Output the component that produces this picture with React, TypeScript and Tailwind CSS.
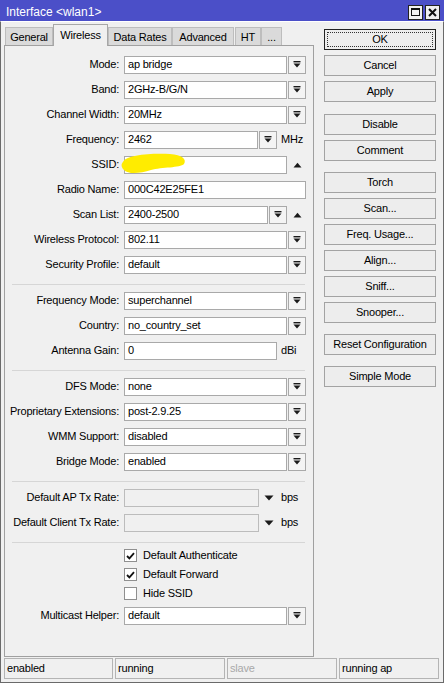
import React from "react";

const DropIcon = () => (
  <svg width="8" height="7" viewBox="0 0 8 7">
    <rect x="0.5" y="0" width="7" height="1.4" fill="#1a1a1a" />
    <polygon points="0.5,2.4 7.5,2.4 4,6.6" fill="#1a1a1a" />
  </svg>
);

const UpTri = () => (
  <svg width="9" height="6" viewBox="0 0 9 6" className="ml-[6px]">
    <polygon points="0.5,5.5 8.5,5.5 4.5,0.8" fill="#1a1a1a" />
  </svg>
);

const DownTri = () => (
  <svg width="10" height="6" viewBox="0 0 10 6">
    <polygon points="0.5,0.5 9.5,0.5 5,5.6" fill="#1a1a1a" />
  </svg>
);

const DropBtn = () => (
  <div className="ml-[1px] w-[18px] h-[18px] border border-[#a9a9a9] bg-[#f4f4f4] flex items-center justify-center">
    <DropIcon />
  </div>
);

const Field = ({ w, value, disabled }: { w: string; value?: string; disabled?: boolean }) => (
  <div
    className={
      "h-[18px] border flex items-center px-[3px] whitespace-nowrap overflow-hidden " +
      w +
      (disabled ? " bg-[#f0f0f0] border-[#bcbcbc]" : " bg-white border-[#a9a9a9]")
    }
  >
    {value}
  </div>
);

const Row = ({ label, children, extra }: { label: string; children: React.ReactNode; extra?: React.ReactNode }) => (
  <div className="relative flex items-center h-[25px]">
    <div className="w-[114px] text-right whitespace-nowrap">{label}</div>
    <div className="ml-[5px] flex items-center">{children}</div>
    {extra}
  </div>
);

const Sep = () => (
  <div className="h-[11px] pt-[7px] pl-[7px] pr-[8px]">
    <div className="h-px bg-[#d6d6d6]" />
  </div>
);

const Check = ({ label, checked }: { label: string; checked?: boolean }) => (
  <div className="flex items-center h-[19px] pl-[119px]">
    <div className="w-[13px] h-[13px] border border-[#8f8f8f] bg-white flex items-center justify-center">
      {checked && (
        <svg width="9" height="8" viewBox="0 0 9 8">
          <path d="M1 4 L3.4 6.4 L8 1.2" stroke="#111" strokeWidth="1.8" fill="none" />
        </svg>
      )}
    </div>
    <span className="ml-[6px]">{label}</span>
  </div>
);

const Btn = ({ label, mt, focus }: { label: string; mt: string; focus?: boolean }) => (
  <div
    className={
      "h-[21px] flex items-center justify-center bg-[#ededed] border " +
      mt +
      (focus ? " border-[#222] p-[2px]" : " border-[#a3a3a3]")
    }
  >
    {focus ? (
      <div className="w-full h-full border border-dotted border-[#333] flex items-center justify-center">{label}</div>
    ) : (
      label
    )}
  </div>
);

export default function App() {
  return (
    <div className="w-[444px] h-[683px] flex flex-col bg-[#f0f0f0] text-[11px] tracking-[-0.2px] text-black font-['Liberation_Sans',Arial,sans-serif] overflow-hidden">
      {/* title bar */}
      <div className="h-[21px] shrink-0 bg-[#4b4fc8] flex items-center justify-between pl-[6px] pr-[4px]">
        <span className="text-white text-[12px] tracking-normal pt-[3px]">Interface &lt;wlan1&gt;</span>
        <div className="flex gap-[2px] pt-[3px]">
          <div className="w-[15px] h-[15px] bg-[#f0f0f0] border border-[#222] flex items-center justify-center">
            <div className="w-[9px] h-[8px] border border-[#111] border-t-2" />
          </div>
          <div className="w-[15px] h-[15px] bg-[#f0f0f0] border border-[#222] flex items-center justify-center">
            <svg width="9" height="9" viewBox="0 0 9 9">
              <path d="M1 1 L8 8 M8 1 L1 8" stroke="#111" strokeWidth="2" />
            </svg>
          </div>
        </div>
      </div>

      {/* body */}
      <div className="flex-1 flex flex-col border border-[#6a6a6a] border-t-white">
        <div className="flex-1 flex pt-[2px] pl-[3px]">
          {/* left column */}
          <div className="w-[310px] flex flex-col">
            <div className="relative z-10 h-[22px] -mb-px flex items-end">
              <div className="ml-[1px] mb-[1px] w-[48px] h-[18px] bg-[#dadada] border border-b-0 border-[#bdbdbd] flex items-center justify-center pt-[2px]">
                General
              </div>
              <div className="w-[55px] h-[22px] bg-[#f0f0f0] border border-b-0 border-[#a7a7a7] flex items-center justify-center pb-[1px]">
                Wireless
              </div>
              <div className="mb-[1px] w-[64px] h-[18px] bg-[#dadada] border border-b-0 border-[#bdbdbd] flex items-center justify-center pt-[2px]">
                Data Rates
              </div>
              <div className="mb-[1px] w-[62px] h-[18px] bg-[#dadada] border border-b-0 border-[#bdbdbd] flex items-center justify-center pt-[2px]">
                Advanced
              </div>
              <div className="ml-[1px] mb-[1px] w-[26px] h-[18px] bg-[#dadada] border border-b-0 border-[#bdbdbd] flex items-center justify-center pt-[2px]">
                HT
              </div>
              <div className="mb-[1px] w-[21px] h-[18px] bg-[#dadada] border border-b-0 border-[#bdbdbd] flex items-center justify-center pt-[2px]">
                ...
              </div>
            </div>

            <div className="flex-1 border border-[#a0a0a0] pt-[6px]">
              <Row label="Mode:">
                <Field w="w-[163px]" value="ap bridge" />
                <DropBtn />
              </Row>
              <Row label="Band:">
                <Field w="w-[163px]" value="2GHz-B/G/N" />
                <DropBtn />
              </Row>
              <Row label="Channel Width:">
                <Field w="w-[163px]" value="20MHz" />
                <DropBtn />
              </Row>
              <Row label="Frequency:">
                <Field w="w-[134px]" value="2462" />
                <DropBtn />
                <span className="ml-[4px]">MHz</span>
              </Row>
              <Row
                label="SSID:"
                extra={
                  <svg
                    width="68"
                    height="24"
                    viewBox="0 0 68 24"
                    className="absolute left-[115px] top-[0px]"
                  >
                    <path
                      d="M3 10 C 6 3, 30 1, 50 2 C 62 3, 67 7, 64 12 C 60 16, 42 15, 31 18 C 21 21, 9 23, 4 18 C 1 15, 1 12, 3 10 Z"
                      fill="#ffec00"
                    />
                  </svg>
                }
              >
                <Field w="w-[163px]" value="" />
                <UpTri />
              </Row>
              <Row label="Radio Name:">
                <Field w="w-[182px]" value="000C42E25FE1" />
              </Row>
              <Row label="Scan List:">
                <Field w="w-[144px]" value="2400-2500" />
                <DropBtn />
                <UpTri />
              </Row>
              <Row label="Wireless Protocol:">
                <Field w="w-[163px]" value="802.11" />
                <DropBtn />
              </Row>
              <Row label="Security Profile:">
                <Field w="w-[163px]" value="default" />
                <DropBtn />
              </Row>
              <Sep />
              <Row label="Frequency Mode:">
                <Field w="w-[163px]" value="superchannel" />
                <DropBtn />
              </Row>
              <Row label="Country:">
                <Field w="w-[163px]" value="no_country_set" />
                <DropBtn />
              </Row>
              <Row label="Antenna Gain:">
                <Field w="w-[153px]" value="0" />
                <span className="ml-[4px]">dBi</span>
              </Row>
              <Sep />
              <Row label="DFS Mode:">
                <Field w="w-[163px]" value="none" />
                <DropBtn />
              </Row>
              <Row label="Proprietary Extensions:">
                <Field w="w-[163px]" value="post-2.9.25" />
                <DropBtn />
              </Row>
              <Row label="WMM Support:">
                <Field w="w-[163px]" value="disabled" />
                <DropBtn />
              </Row>
              <Row label="Bridge Mode:">
                <Field w="w-[163px]" value="enabled" />
                <DropBtn />
              </Row>
              <Sep />
              <Row label="Default AP Tx Rate:">
                <Field w="w-[135px]" disabled />
                <span className="ml-[5px] flex">
                  <DownTri />
                </span>
                <span className="ml-[7px]">bps</span>
              </Row>
              <Row label="Default Client Tx Rate:">
                <Field w="w-[135px]" disabled />
                <span className="ml-[5px] flex">
                  <DownTri />
                </span>
                <span className="ml-[7px]">bps</span>
              </Row>
              <Sep />
              <Check label="Default Authenticate" checked />
              <Check label="Default Forward" checked />
              <Check label="Hide SSID" />
              <Row label="Multicast Helper:">
                <Field w="w-[163px]" value="default" />
                <DropBtn />
              </Row>
            </div>
          </div>

          {/* right column */}
          <div className="ml-[10px] w-[112px] pt-[5px] flex flex-col">
            <Btn label="OK" mt="mt-0" focus />
            <Btn label="Cancel" mt="mt-[5px]" />
            <Btn label="Apply" mt="mt-[5px]" />
            <Btn label="Disable" mt="mt-[12px]" />
            <Btn label="Comment" mt="mt-[5px]" />
            <Btn label="Torch" mt="mt-[11px]" />
            <Btn label="Scan..." mt="mt-[5px]" />
            <Btn label="Freq. Usage..." mt="mt-[5px]" />
            <Btn label="Align..." mt="mt-[5px]" />
            <Btn label="Sniff..." mt="mt-[5px]" />
            <Btn label="Snooper..." mt="mt-[5px]" />
            <Btn label="Reset Configuration" mt="mt-[11px]" />
            <Btn label="Simple Mode" mt="mt-[11px]" />
          </div>
        </div>

        {/* status bar */}
        <div className="mt-[1px] mb-[3px] h-[21px] flex gap-[2px] pl-[3px]">
          <div className="w-[109px] border border-[#b4b4b4] flex items-center pl-[2px]">enabled</div>
          <div className="w-[110px] border border-[#b4b4b4] flex items-center pl-[2px]">running</div>
          <div className="w-[110px] border border-[#b4b4b4] flex items-center pl-[2px] text-[#a8a8a8]">slave</div>
          <div className="w-[100px] border border-[#b4b4b4] flex items-center pl-[2px]">running ap</div>
        </div>
      </div>
    </div>
  );
}
